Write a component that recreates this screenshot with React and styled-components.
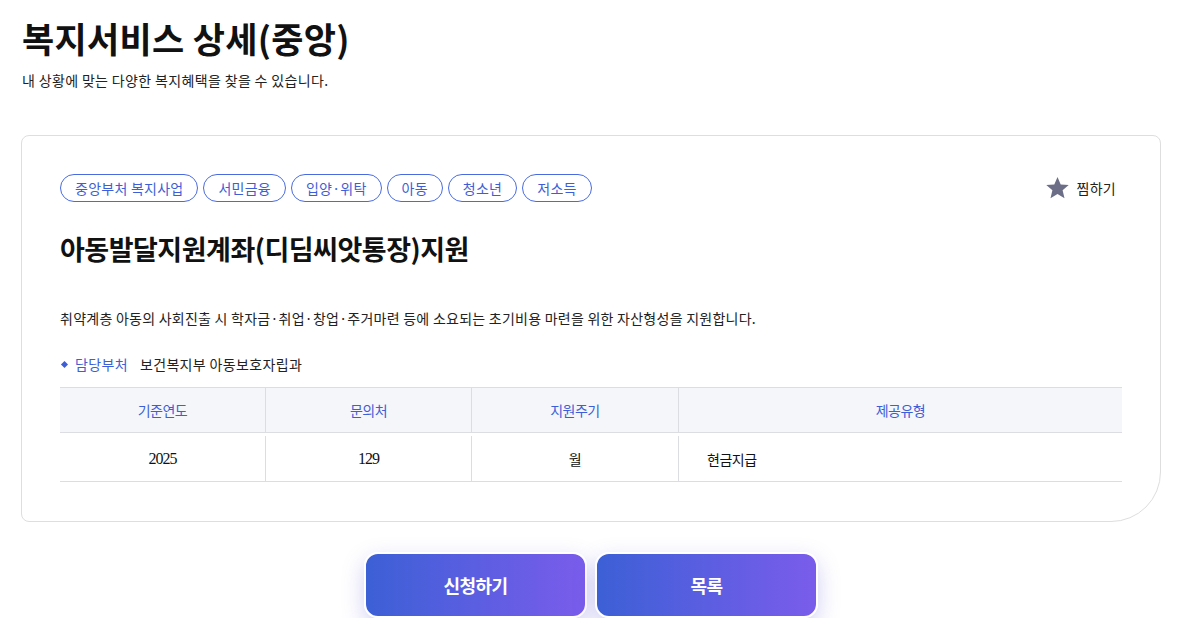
import styled, { createGlobalStyle } from "styled-components";

const tags = ["중앙부처 복지사업", "서민금융", "입양·위탁", "아동", "청소년", "저소득"];

const columns = [
    { head: "기준연도", value: "2025", num: true },
    { head: "문의처", value: "129", num: true },
    { head: "지원주기", value: "월" },
    { head: "제공유형", value: "현금지급", left: true },
];

const App = () => {
    return (
        <>
            <GlobalStyle />
            <Page>
                <Title>복지서비스 상세(중앙)</Title>
                <Sub>내 상황에 맞는 다양한 복지혜택을 찾을 수 있습니다.</Sub>

                <Card>
                    <TopRow>
                        <Tags>
                            {tags.map(tag => (
                                <Tag key={tag}>{tag}</Tag>
                            ))}
                        </Tags>
                        <Bookmark>
                            <svg width="25" height="24" viewBox="0 0 24 24">
                                <path
                                    d="M12 1l3.2 7.4 8 .7-6.1 5.2 1.9 7.9L12 18l-7 4.2 1.9-7.9L.8 9.1l8-.7z"
                                    fill="#6b6e86"
                                />
                            </svg>
                            찜하기
                        </Bookmark>
                    </TopRow>

                    <Heading>아동발달지원계좌(디딤씨앗통장)지원</Heading>

                    <Desc>
                        취약계층 아동의 사회진출 시 학자금·취업·창업·주거마련 등에 소요되는 초기비용 마련을 위한 자산형성을 지원합니다.
                    </Desc>

                    <Dept>
                        <Diamond />
                        <DeptLabel>담당부처</DeptLabel>
                        <span>보건복지부 아동보호자립과</span>
                    </Dept>

                    <Table>
                        <HeadRow>
                            {columns.map(c => (
                                <HeadCell key={c.head}>{c.head}</HeadCell>
                            ))}
                        </HeadRow>
                        <BodyRow>
                            {columns.map(c => (
                                <BodyCell key={c.head} $num={c.num} $left={c.left}>
                                    {c.value}
                                </BodyCell>
                            ))}
                        </BodyRow>
                    </Table>
                </Card>

                <Buttons>
                    <ActionButton>신청하기</ActionButton>
                    <ActionButton>목록</ActionButton>
                </Buttons>
            </Page>
        </>
    );
};

export default App;

const GlobalStyle = createGlobalStyle`
body {
    margin: 0;
    background: #fff;
    font-family: "Noto Sans CJK KR", "Noto Sans", sans-serif;
    color: #222;
}
`;

const Page = styled.div`
width: 1140px;
padding: 14px 0 0 21px;
`;

const Title = styled.h1`
margin: 0;
padding-left: 1px;
font-size: 35px;
font-weight: 700;
line-height: 48px;
letter-spacing: 0.3px;
color: #111;
`;

const Sub = styled.p`
margin: 8px 0 0;
padding-left: 1px;
font-size: 14px;
line-height: 20px;
letter-spacing: 0.35px;
color: #222;
`;

const Card = styled.div`
margin-top: 45px;
border: 1px solid #dedede;
border-radius: 8px 8px 50px 8px;
padding: 38px 38px 39px 38px;
`;

const TopRow = styled.div`
display: flex;
justify-content: space-between;
align-items: center;
`;

const Tags = styled.div`
display: flex;
gap: 5px;
`;

const Tag = styled.span`
display: flex;
align-items: center;
height: 28px;
box-sizing: border-box;
padding: 0 14px;
border: 1px solid #4a6be0;
border-radius: 14px;
font-size: 14px;
letter-spacing: 0.25px;
color: #3d5ed6;
`;

const Bookmark = styled.div`
display: flex;
align-items: center;
gap: 6px;
margin-right: 6px;
font-size: 14px;
letter-spacing: 0.3px;
color: #222;
`;

const Heading = styled.h2`
margin: 27px 0 0;
font-size: 27px;
font-weight: 700;
line-height: 40px;
letter-spacing: -0.5px;
color: #111;
`;

const Desc = styled.p`
margin: 38px 0 0;
font-size: 14px;
line-height: 22px;
letter-spacing: 0.25px;
color: #222;
`;

const Dept = styled.div`
display: flex;
align-items: center;
margin-top: 25px;
font-size: 14px;
line-height: 20px;
letter-spacing: 0.35px;
color: #222;
`;

const Diamond = styled.span`
width: 5px;
height: 5px;
margin: 0 8px 0 2px;
background: #3d5ed6;
transform: rotate(45deg);
`;

const DeptLabel = styled.span`
color: #3d5ed6;
margin-right: 12px;
`;

const Table = styled.div`
margin-top: 13px;
border-top: 1px solid #dcdde2;
border-bottom: 1px solid #dcdde2;
`;

const grid = `
display: grid;
grid-template-columns: 205px 206px 207px 1fr;
`;

const HeadRow = styled.div`
${grid}
height: 44px;
background: #f5f6fa;
border-bottom: 1px solid #dcdde2;
`;

const HeadCell = styled.div`
display: flex;
align-items: center;
justify-content: center;
font-size: 14px;
letter-spacing: -0.5px;
color: #3d5ed6;

& + & {
    border-left: 1px solid #dcdde2;
}
`;

const BodyRow = styled.div`
${grid}
height: 48px;
padding-top: 3px;
box-sizing: border-box;
`;

const BodyCell = styled.div`
display: flex;
align-items: center;
justify-content: ${p => (p.$left ? "flex-start" : "center")};
padding-left: ${p => (p.$left ? "28px" : "0")};
font-family: ${p => (p.$num ? '"Liberation Serif", serif' : '"Noto Sans CJK KR", sans-serif')};
font-size: ${p => (p.$num ? "16px" : "14px")};
letter-spacing: ${p => (p.$num ? "-1px" : "-0.5px")};
color: #111;

& + & {
    border-left: 1px solid #dcdde2;
}
`;

const Buttons = styled.div`
display: flex;
justify-content: center;
gap: 8px;
margin-top: 30px;
`;

const ActionButton = styled.button`
width: 223px;
height: 66px;
border: 2px solid #fff;
border-radius: 14px;
background: linear-gradient(90deg, #3c60d6 0%, #7a5ceb 100%);
box-shadow: 0 8px 22px rgba(92, 86, 214, 0.28);
color: #fff;
font-family: "Noto Sans CJK KR", sans-serif;
font-size: 18px;
font-weight: 700;
letter-spacing: -0.5px;
cursor: pointer;
`;
